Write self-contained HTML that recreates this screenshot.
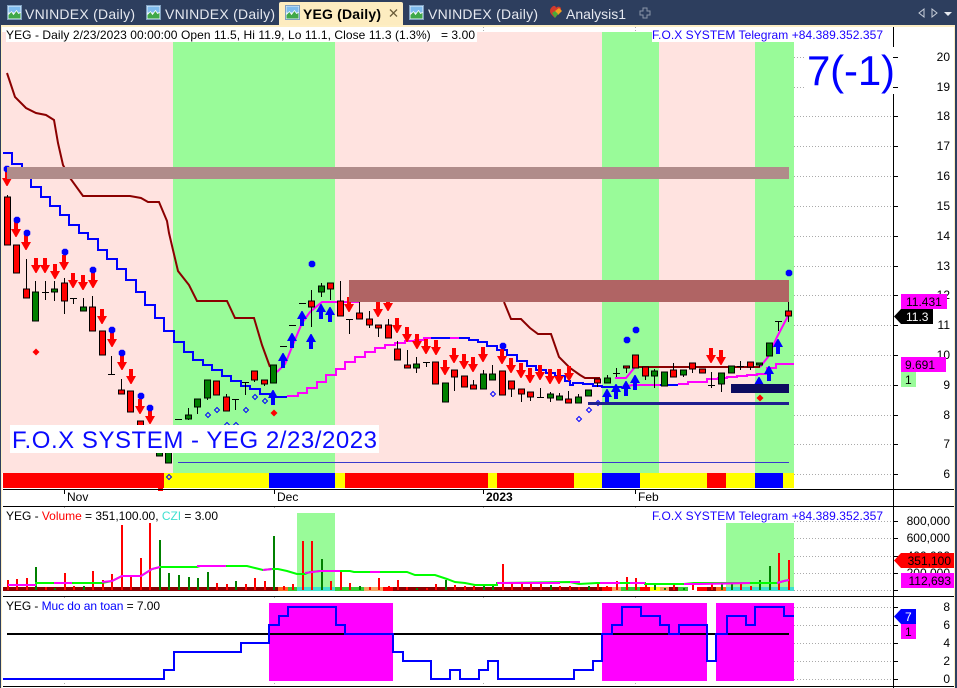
<!DOCTYPE html>
<html><head><meta charset="utf-8"><title>YEG Daily</title>
<style>
html,body{margin:0;padding:0;background:#fff;width:957px;height:688px;overflow:hidden}
svg{display:block}
text{font-family:"Liberation Sans",Arial,sans-serif;font-size:12px;white-space:pre}
.y{text-anchor:end}
.g{stroke:#aaa;stroke-width:1;stroke-dasharray:1 2;fill:none}
</style></head><body>
<svg width="957" height="688" viewBox="0 0 957 688" xmlns="http://www.w3.org/2000/svg">
<defs>
<path id="d" d="M-2-15h4v7h3L.5 0h-1L-5-8h3z" fill="#f00"/>
<path id="u" d="M-2 15h4v-7h3L.5 0h-1L-5 8h3z" fill="#00f"/>
<path id="b" d="M-1.500-3.300h3L3.300-1.500v3L1.500 3.300h-3L-3.300 1.500v-3z" fill="#00f"/>
<path id="r" d="M0-3.500L3.500 0 0 3.500-3.500 0z" fill="#f00"/>
<path id="o" d="M0-2.500L2.500 0 0 2.500-2.500 0z" fill="none" stroke="#00f" stroke-width="1"/>
<g id="ic"><rect x="0" y="0" width="14" height="14" fill="#e3eefa" stroke="#7f9fbf"/><rect x="1" y="1" width="12" height="6" fill="#7fbcee"/><path d="M1 13V9l3-3 2 3 3-4 2 3 2-1v6z" fill="#3fa848"/><path d="M1 9l3-3 2 3 3-4 2 3 2-1" fill="none" stroke="#fff" stroke-width=".7"/></g>
</defs>

<!-- window chrome -->
<rect width="957" height="25" fill="#2d3e5e"/>
<rect y="25" width="957" height="2" fill="#fdeec4"/>
<path d="M279 25V4q0-2 2-2h120q2 0 2 2v21z" fill="#fdecc0"/>
<use href="#ic" x="7.500" y="5.500"/><use href="#ic" x="146.500" y="5.500"/><use href="#ic" x="285.500" y="5.500"/><use href="#ic" x="409.500" y="5.500"/>
<text x="25" y="19" style="font-size:14px" fill="#e6e9f0" textLength="110">VNINDEX (Daily)</text>
<text x="165" y="19" style="font-size:14px" fill="#e6e9f0" textLength="110">VNINDEX (Daily)</text>
<text x="303" y="19" style="font-size:14px;font-weight:bold" fill="#000" textLength="78">YEG (Daily)</text>
<path d="M390 9.500l7 7m0-7l-7 7" stroke="#6b5d3a" stroke-width="1.300"/>
<text x="428" y="19" style="font-size:14px" fill="#e6e9f0" textLength="110">VNINDEX (Daily)</text>
<path d="M552 7c2-2 4-1 4 1 1-2 5-2 5 1 0 3-4 6-6 9-2-2-5-4-5-7 0-2 1-3 2-4z" fill="#d23a2c"/><path d="M555 11l4-3 3 3-4 4z" fill="#f2a020"/><path d="M552 13l3-2 3 3-3 4z" fill="#4aa83a"/>
<text x="566" y="19" style="font-size:14px" fill="#e6e9f0" textLength="60">Analysis1</text>
<path d="M642 8.500h4v3h3v4h-3v3h-4v-3h-3v-4h3z" fill="none" stroke="#8b95a8" transform="translate(1 -.5)"/>
<path d="M924 9v8l-5-4z" fill="none" stroke="#c8ced9"/><path d="M932 9v8l5-4z" fill="none" stroke="#c8ced9"/><path d="M944 12h8l-4 4z" fill="#e6e9f0"/>

<!-- main pane bg -->
<rect x="2" y="32" width="792" height="441" fill="#ffe3e0"/>
<rect x="173" y="42" width="162" height="431" fill="#99fb99"/>
<rect x="602" y="32" width="57" height="441" fill="#99fb99"/>
<rect x="755" y="42" width="39" height="441" fill="#99fb99"/>
<rect x="6" y="32" width="471" height="10" fill="#fff"/>
<rect x="652" y="30" width="232" height="12" fill="#fff"/>
<path class="g" d="M483.500 27v5M635.500 27v5M64.500 507v3M274.500 507v3M483.500 507v3M635.500 507v3M64.500 597v3M274.500 597v3M483.500 597v3M635.500 597v3M64.500 683v3M274.500 683v3M483.500 683v3M635.500 683v3"/>

<!-- grid -->
<path class="g" d="M794 57.500h99M794 87.500h99M794 116.500h99M794 146.500h99M794 176.500h99M794 206.500h99M794 236.500h99M794 266.500h99M794 295.500h99M794 325.500h99M794 355.500h99M794 385.500h99M794 415.500h99M794 444.500h99M794 474.500h99M794 521.500h99M794 538.500h99M794 556.500h99M794 573.500h99M794 590.500h99M794 607.500h99M794 625.500h99M794 643.500h99M794 661.500h99M794 679.500h99"/>

<!-- ribbon -->
<rect x="3" y="473" width="161" height="15" fill="#f00"/><rect x="164" y="473" width="105" height="15" fill="#ff0"/><rect x="269" y="473" width="66" height="15" fill="#00f"/><rect x="335" y="473" width="10" height="15" fill="#ff0"/><rect x="345" y="473" width="143" height="15" fill="#f00"/><rect x="488" y="473" width="9" height="15" fill="#ff0"/><rect x="497" y="473" width="77" height="15" fill="#f00"/><rect x="574" y="473" width="28" height="15" fill="#ff0"/><rect x="602" y="473" width="38" height="15" fill="#00f"/><rect x="640" y="473" width="67" height="15" fill="#ff0"/><rect x="707" y="473" width="19" height="15" fill="#f00"/><rect x="726" y="473" width="29" height="15" fill="#ff0"/><rect x="755" y="473" width="28" height="15" fill="#00f"/><rect x="783" y="473" width="11" height="15" fill="#ff0"/>
<rect x="158" y="488" width="5" height="3" fill="#f00"/>
<use href="#o" x="169" y="477"/>

<!-- lines -->
<path d="M7 73L15 97 26 108 36 113 46 115 54 120 58 143 63 165 70 178 83 196H130L141 198 148 202H159L167 221 169 233 173 250 178 271 189 285 197 301H227L235 318H254L262 345 270 367M504 302L511 319H521L530 328 538 334H551L559 357 570 368 580 375 585 378H600M637 367H760" fill="none" stroke="#8b0000" stroke-width="2"/>
<path d="M3 153H12V164H22V178H31V187H41V197H50V206H60V215H69V225H79V233H88V239H98V250H107V259H117V269H126V280H136V292H145V305H155V318H164V331H174V342H184V352H193V360H203V365H212V370H222V376H231V381H241V386H250V389H260V394H270V397H287M431 338H450M459 338H469V340H478V342H487V346H497V350H507V355H517V361H527V366H536V370H546V373H555V376H565V381H570V385H573V383H583V384H593V386H602V387H622M660 385H678" fill="none" stroke="#00f" stroke-width="2"/>
<path d="M287 396H298V393H307V388H317V382H326V375H336V369H345V362H355V357H365V352H375V348H385V345H395V343H405V341H415V340H424V338H431M450 338H459M622 387L633 385H660M678 384H688V382H707V379H718V378H727V377H737V376H747V375H757V374H767V368H776V364H794M277 372L285 364 292 347 302 323 310 312 322 302H360M615 378H626L635 367M760 367L768 357 777 337 788 316" fill="none" stroke="#f0f" stroke-width="2"/>

<!-- wicks -->
<path d="M7.500 195v2M26.500 259v30M35.500 281v11M45.500 281v19M54.500 281v20M64.500 278v36M73.500 298v6M83.500 298v9M92.500 296v11M111.500 356v18M121.500 379v11M188.500 408v12M197.500 407v7M207.500 398v2M226.500 394v17M235.500 399v11M245.500 382v13M254.500 380v2M264.500 384v2M311.500 290v37M321.500 283v14M330.500 289v11M340.500 281v20M349.500 319v15M359.500 302v11M369.500 311v17M378.500 328v9M388.500 319v6M397.500 341v8M407.500 350v15M416.500 357v16M426.500 362v5M454.500 377v14M473.500 380v5M483.500 370v4M492.500 365v9M511.500 389v8M521.500 394v8M530.500 397v4M540.500 388v9M550.500 392v10M559.500 393v3M568.500 391v8M578.500 394v9M597.500 383v4M607.500 375v3M616.500 368v9M626.500 368v5M645.500 376v4M654.500 369v19M673.500 363v7M683.500 375v2M692.500 369v4M711.500 372v16M721.500 384v8M740.500 361v9M750.500 367v3M759.500 365v2M778.500 321v10M788.500 299v23" stroke="#000" fill="none"/>
<path d="M42 292.500h7M70 298.500h7M108 374.500h7M175 419.500h7M232 399.500h7M242 382.500h7M280 346.500h7M289 325.500h7M299 303.500h7M346 319.500h7M423 362.500h7M537 397.500h7M613 373.500h7M708 385.500h7M737 366.500h7M775 321.500h7" stroke="#000" fill="none"/>
<!-- bodies -->
<path fill="#f00" stroke="#000" d="M4.500 197h6v48h-6zM13.500 245h6v28h-6zM23.500 289h6v9h-6zM61.500 283h6v18h-6zM89.500 307h6v24h-6zM99.500 331h6v24h-6zM118.500 390h6v4h-6zM127.500 391h6v21h-6zM137.500 421h6v20h-6zM213.500 381h6v14h-6zM223.500 397h6v14h-6zM251.500 371h6v9h-6zM261.500 380h6v4h-6zM308.500 301h6v6h-6zM327.500 283h6v6h-6zM337.500 301h6v15h-6zM356.500 313h6v6h-6zM366.500 319h6v6h-6zM375.500 325h6v3h-6zM385.500 325h6v13h-6zM394.500 349h6v11h-6zM404.500 365h6v3h-6zM432.500 362h6v22h-6zM451.500 370h6v7h-6zM461.500 376h6v11h-6zM470.500 385h6v4h-6zM499.500 371h6v24h-6zM508.500 381h6v8h-6zM518.500 389h6v5h-6zM527.500 392h6v5h-6zM565.500 399h6v4h-6zM594.500 379h6v4h-6zM623.500 366h6v2h-6zM632.500 355h6v13h-6zM642.500 367h6v9h-6zM670.500 370h6v7h-6zM689.500 363h6v6h-6zM699.500 369h6v4h-6zM747.500 362h6v5h-6zM785.500 311h6v5h-6z"/>
<path fill="#008000" stroke="#000" d="M32.500 292h6v29h-6zM51.500 289h6v3h-6zM80.500 307h6v4h-6zM156.500 452h6v4h-6zM165.500 452h6v11h-6zM185.500 415h6v4h-6zM194.500 399h6v8h-6zM204.500 380h6v18h-6zM270.500 365h6v18h-6zM318.500 286h6v6h-6zM413.500 364h6v4h-6zM442.500 383h6v19h-6zM480.500 374h6v15h-6zM489.500 374h6v6h-6zM547.500 394h6v4h-6zM556.500 396h6v4h-6zM575.500 397h6v6h-6zM585.500 390h6v6h-6zM604.500 378h6v5h-6zM651.500 371h6v5h-6zM661.500 372h6v14h-6zM680.500 370h6v5h-6zM718.500 373h6v11h-6zM728.500 366h6v7h-6zM756.500 363h6v2h-6zM766.500 343h6v13h-6z"/>

<!-- red arrows -->
<use href="#d" x="7" y="186"/><use href="#d" x="16" y="237"/><use href="#d" x="26" y="250"/><use href="#d" x="36" y="273"/><use href="#d" x="45" y="273"/><use href="#d" x="55" y="279"/><use href="#d" x="64" y="270"/><use href="#d" x="73" y="288"/><use href="#d" x="83" y="290"/><use href="#d" x="93" y="288"/><use href="#d" x="102" y="324"/><use href="#d" x="112" y="347"/><use href="#d" x="122" y="370"/><use href="#d" x="131" y="384"/><use href="#d" x="140" y="414"/><use href="#d" x="150" y="424"/>
<use href="#d" x="349" y="312"/><use href="#d" x="378" y="317"/><use href="#d" x="388" y="311"/><use href="#d" x="397" y="333"/><use href="#d" x="407" y="342"/><use href="#d" x="417" y="349"/><use href="#d" x="426" y="354"/><use href="#d" x="436" y="355"/><use href="#d" x="445" y="375"/><use href="#d" x="454" y="363"/><use href="#d" x="464" y="369"/><use href="#d" x="473" y="372"/><use href="#d" x="483" y="362"/><use href="#d" x="502" y="364"/><use href="#d" x="511" y="373"/><use href="#d" x="521" y="378"/><use href="#d" x="530" y="383"/><use href="#d" x="540" y="380"/><use href="#d" x="550" y="384"/><use href="#d" x="559" y="384"/><use href="#d" x="569" y="381"/><use href="#d" x="711" y="363"/><use href="#d" x="721" y="365"/>
<!-- blue arrows -->
<use href="#u" x="273" y="390"/><use href="#u" x="283" y="353"/><use href="#u" x="292" y="333"/><use href="#u" x="302" y="311"/><use href="#u" x="311" y="334"/><use href="#u" x="321" y="304"/><use href="#u" x="330" y="307"/><use href="#u" x="607" y="389"/><use href="#u" x="616" y="384"/><use href="#u" x="626" y="381"/><use href="#u" x="635" y="375"/><use href="#u" x="759" y="377"/><use href="#u" x="769" y="366"/><use href="#u" x="778" y="339"/>
<!-- dots -->
<use href="#b" x="7" y="169"/><use href="#b" x="17" y="220"/><use href="#b" x="27" y="233"/><use href="#b" x="65" y="252"/><use href="#b" x="93" y="270"/><use href="#b" x="112" y="330"/><use href="#b" x="122" y="353"/><use href="#b" x="141" y="396"/><use href="#b" x="150" y="408"/><use href="#b" x="312" y="264"/><use href="#b" x="503" y="346"/><use href="#b" x="627" y="340"/><use href="#b" x="636" y="330"/><use href="#b" x="789" y="273"/>
<use href="#r" x="36" y="352"/><use href="#r" x="274" y="413"/><use href="#r" x="760" y="398"/>
<use href="#o" x="208" y="415"/><use href="#o" x="217" y="410"/><use href="#o" x="227" y="425"/><use href="#o" x="236" y="425"/><use href="#o" x="246" y="410"/><use href="#o" x="255" y="397"/><use href="#o" x="265" y="401"/><use href="#o" x="493" y="394"/><use href="#o" x="579" y="419"/><use href="#o" x="589" y="410"/><use href="#o" x="598" y="403"/>

<!-- overlays -->
<rect x="7" y="167" width="782" height="12" fill="#b08c8a"/>
<rect x="349" y="280" width="440" height="22" fill="#b06464"/>
<rect x="731" y="384" width="58" height="9" fill="#0c0c60"/>
<rect x="588" y="402" width="201" height="3" fill="#1f1f8f"/>
<rect x="178" y="462" width="611" height="1" fill="#3a3acc"/>
<rect x="10" y="425" width="369" height="28" fill="#fff"/>
<text x="12" y="448" style="font-size:24px" fill="#0a0aff" textLength="365">F.O.X SYSTEM - YEG 2/23/2023</text>
<text x="6" y="39" fill="#000" textLength="469">YEG - Daily 2/23/2023 00:00:00 Open 11.5, Hi 11.9, Lo 11.1, Close 11.3 (1.3%)   = 3.00</text>
<text x="652" y="39" fill="#1a00ff" textLength="231">F.O.X SYSTEM Telegram +84.389.352.357</text>

<!-- frame lines and axis -->
<rect x="893" y="27" width="1" height="661" fill="#000"/>
<rect x="3" y="489" width="952" height="1" fill="#000"/><rect x="3" y="506" width="952" height="1" fill="#000"/><rect x="3" y="596" width="952" height="1" fill="#000"/><rect x="3" y="686" width="952" height="1" fill="#000"/>
<path d="M64.500 490v4M274.500 490v4M483.500 490v4M635.500 490v4" stroke="#000"/>
<path d="M893 57.500h5M893 87.500h5M893 116.500h5M893 146.500h5M893 176.500h5M893 206.500h5M893 236.500h5M893 266.500h5M893 295.500h5M893 325.500h5M893 355.500h5M893 385.500h5M893 415.500h5M893 444.500h5M893 474.500h5M893 521.500h5M893 538.500h5M893 556.500h5M893 573.500h5M893 590.500h5M893 607.500h5M893 625.500h5M893 643.500h5M893 661.500h5M893 679.500h5" stroke="#000"/>
<text x="67" y="501">Nov</text><text x="277" y="501">Dec</text><text x="486" y="501" style="font-weight:bold">2023</text><text x="638" y="501">Feb</text>

<!-- 7(-1) -->
<rect x="806" y="47" width="88" height="47" fill="#fff"/>
<text x="807" y="85" style="font-size:42px" fill="#00f" textLength="88">7(-1)</text>
<path d="M893 57.500h5M893 87.500h5" stroke="#000"/>

<!-- price labels -->
<g fill="#000" text-anchor="end">
<text x="950" y="61">20</text><text x="950" y="91">19</text><text x="950" y="120">18</text><text x="950" y="150">17</text><text x="950" y="180">16</text><text x="950" y="210">15</text><text x="950" y="240">14</text><text x="950" y="270">13</text><text x="950" y="299">12</text><text x="950" y="329">11</text><text x="950" y="359">10</text><text x="950" y="389">9</text><text x="950" y="419">8</text><text x="950" y="448">7</text><text x="950" y="478">6</text>
<text x="950" y="525">800,000</text><text x="950" y="542">600,000</text><text x="950" y="560">400,000</text><text x="950" y="577">200,000</text>
<text x="950" y="611">8</text><text x="950" y="629">6</text><text x="950" y="647">4</text><text x="950" y="665">2</text><text x="950" y="683">0</text>
</g>
<rect x="901" y="294" width="46" height="15" fill="#f0f"/><text x="906" y="306">11.431</text>
<path d="M894 316.500L901 309H933V324H901z" fill="#000"/><text x="906" y="321" fill="#fff">11.3</text>
<rect x="901" y="357" width="45" height="15" fill="#f0f"/><text x="905" y="369">9.691</text>
<rect x="901" y="372" width="15" height="15" fill="#99fb99"/><text x="905" y="384">1</text>

<!-- volume pane -->
<rect x="297" y="513" width="38" height="77" fill="#99fb99"/>
<rect x="726" y="523" width="68" height="67" fill="#99fb99"/>
<text x="6" y="520" fill="#000" textLength="212">YEG - <tspan fill="#f00">Volume</tspan> = 351,100.00, <tspan fill="#40e0d0">CZI</tspan> = 3.00</text>
<text x="652" y="520" fill="#1a00ff" textLength="231">F.O.X SYSTEM Telegram +84.389.352.357</text>
<!-- strip -->
<rect x="3" y="587" width="791" height="4" fill="#8b0000"/>
<rect x="278" y="587" width="10" height="4" fill="#ff6a20"/><rect x="288" y="587" width="9" height="4" fill="#32cd32"/><rect x="297" y="587" width="38" height="4" fill="#40e0d0"/><rect x="335" y="587" width="29" height="4" fill="#32cd32"/><rect x="364" y="587" width="19" height="4" fill="#f4a460"/><rect x="383" y="587" width="10" height="4" fill="#f00"/><rect x="602" y="587" width="10" height="4" fill="#f00"/><rect x="612" y="587" width="9" height="4" fill="#f4a460"/><rect x="621" y="587" width="19" height="4" fill="#32cd32"/><rect x="640" y="587" width="10" height="4" fill="#f00"/><rect x="650" y="587" width="10" height="4" fill="#ff0"/><rect x="660" y="587" width="9" height="4" fill="#f4a460"/><rect x="678" y="587" width="10" height="4" fill="#32cd32"/><rect x="688" y="587" width="9" height="4" fill="#fff"/><rect x="697" y="587" width="10" height="4" fill="#f00"/><rect x="716" y="587" width="10" height="4" fill="#ff6a20"/><rect x="726" y="587" width="68" height="4" fill="#40e0d0"/>
<!-- volume bars -->
<path stroke="#f00" stroke-width="2" fill="none" d="M8 580V590M17 579V590M27 578V590M46 587V590M65 573V590M74 586V590M93 571V590M103 580V590M112 574V590M122 525V590M131 575V590M141 558V590M150 523V590M217 583V590M227 584V590M246 584V590M255 578V590M265 581V590M284 586V590M293 584V590M303 541V590M312 541V590M331 581V590M341 571V590M350 583V590M370 587V590M379 578V590M389 586V590M398 580V590M407 587V590M427 588V590M436 584V590M455 585V590M465 586V590M474 586V590M503 564V590M512 582V590M522 582V590M531 584V590M541 582V590M560 586V590M570 586V590M579 587V590M598 583V590M607 586V590M617 581V590M627 577V590M636 578V590M646 583V590M674 585V590M693 585V590M712 584V590M741 584V590M751 586V590M779 553V590M789 560V590"/>
<path stroke="#008000" stroke-width="2" fill="none" d="M36 567V590M55 588V590M84 586V590M160 540V590M169 573V590M179 575V590M189 577V590M198 578V590M208 572V590M236 581V590M274 536V590M322 559V590M360 586V590M417 588V590M446 580V590M484 584V590M493 584V590M551 585V590M589 586V590M655 585V590M665 588V590M684 588V590M722 584V590M732 584V590M760 580V590M770 566V590"/>
<!-- CZI -->
<path fill="none" stroke="#0f0" stroke-width="2" d="M8 585H36L36 583H102L112 581 122 576H141L152 569 160 567H197L200 566H247L255 568 263 570 272 569H278L287 571 297 574H305L310 572 320 571H350L354 572H407L415 575H435L447 579 455 582 465 583 475 585H497V583L570 582 579 584 597 583H645V584H684L694 583H750L777 583 784 581 789 580"/>
<path fill="none" stroke="#f0f" stroke-width="2" d="M8 585H36M54 583H72M102 582L112 581 122 576H141L152 569 160 567M197 566H226M263 570 272 569M305 573L320 571H340M370 572H380M497 583H560M570 582H580M600 583H620M630 583H645M684 584H700L750 583M777 583L784 581 789 580"/>
<path d="M894 560.500L901 553H955V568H901z" fill="#f00"/><text x="951" y="565" text-anchor="end" fill="#000">351,100</text>
<rect x="901" y="573" width="54" height="15" fill="#f0f"/><text x="951" y="585" text-anchor="end" fill="#000">112,693</text>

<!-- safety pane -->
<rect x="269" y="603" width="124" height="78" fill="#f0f"/><rect x="602" y="603" width="105" height="78" fill="#f0f"/><rect x="716" y="603" width="78" height="78" fill="#f0f"/>
<text x="6" y="610" fill="#000" textLength="154">YEG - <tspan fill="#00f">Muc do an toan</tspan> = 7.00</text>
<rect x="7" y="633" width="782" height="2" fill="#000"/>
<path fill="none" stroke="#00f" stroke-width="2" d="M3 679H164V670H174V652H241V643H269V625H279V616H288V607H336V625H345V634H393V652H403V661H431V679H450V670H460V679H479V670H488V661H498V679H574V670H593V661H602V634H612V625H622V607H641V616H660V625H669V634H679V625H707V661H716V634H727V616H746V625H755V607H784V616H794"/>
<path d="M894 616.500L901 609H916V624H901z" fill="#00f"/><text x="905" y="621" fill="#fff">7</text>
<rect x="901" y="624" width="15" height="15" fill="#f0f"/><text x="905" y="636" fill="#000">1</text>

<!-- window edges -->
<rect y="25" width="1" height="663" fill="#2d3e5e"/><rect x="1" y="27" width="1" height="661" fill="#fdeec4"/>
<rect x="955" y="25" width="2" height="663" fill="#2d3e5e"/><rect x="954" y="27" width="1" height="661" fill="#fdeec4"/>
</svg>
</body></html>
